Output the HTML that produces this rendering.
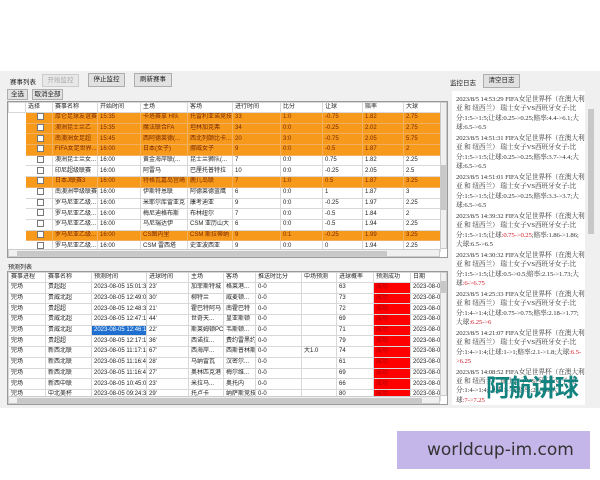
<!DOCTYPE html>
<html><head><meta charset="utf-8"><style>
*{margin:0;padding:0;box-sizing:border-box}
body{width:600px;height:480px;background:#fff;position:relative;overflow:hidden;font-family:"Liberation Sans","Noto Sans CJK SC",sans-serif;font-size:6.5px;color:#222}
.win{position:absolute;left:0;top:71px;width:600px;height:337px;background:#f0f0f0}
.abs{position:absolute}
.btn{position:absolute;border:1px solid #adadad;background:#e1e1e1;text-align:center;font-size:6.5px;line-height:12px;color:#222}
table{border-collapse:collapse;table-layout:fixed;position:absolute;background:#fff}
td{border:1px solid #d8d8d8;white-space:nowrap;overflow:hidden;padding-left:2px;font-size:6px;height:10.7px;line-height:9px}
tr.h td{background:#fff;height:8px;color:#222}
tr.o td{background:#f79a1c;color:#7a2800;border-color:#f0b060}
.cb{display:inline-block;width:7px;height:7px;border:1px solid #777;background:#fff;vertical-align:middle}
.sb{position:absolute;background:#f0f0f0;border:1px solid #ccc}
.log{position:absolute;left:452px;top:91px;width:133px;height:314px;background:#fff;overflow:hidden;padding-top:4px}
.log p{font-family:"Liberation Serif","Noto Serif CJK SC",serif;font-size:6.7px;line-height:9.3px;color:#333;margin:0 0 1.8px 4px;white-space:nowrap;letter-spacing:-0.1px}
.r{color:#d0202a}
.red{background:#f00!important;color:#a00}
.sel{background:#1e6fd0;color:#fff}
</style></head><body>
<div class="win">
<div class="abs" style="left:10px;top:5px;font-size:6.5px">赛事列表</div>
<div class="btn" style="left:42px;top:3px;width:37px;height:13px;color:#aaa;background:#e8e8e8;border-color:#ccc">开始监控</div>
<div class="btn" style="left:88px;top:2px;width:37px;height:14px">停止监控</div>
<div class="btn" style="left:134px;top:2px;width:38px;height:14px">刷新赛事</div>
<div class="btn" style="left:7px;top:18px;width:21px;height:11px;line-height:9px">全选</div>
<div class="btn" style="left:32px;top:18px;width:31px;height:11px;line-height:9px">取消全部</div>
<div class="abs" style="left:450px;top:6px">监控日志</div>
<div class="btn" style="left:483px;top:3px;width:37px;height:14px">清空日志</div>
</div>

<div class="abs" style="left:7px;top:101px;width:441px;height:157px;background:#fff;border:1px solid #999"></div>
<table style="left:8px;top:102px;width:432px">
<colgroup><col style="width:17px"><col style="width:27px"><col style="width:45px"><col style="width:43px"><col style="width:47px"><col style="width:45px"><col style="width:48px"><col style="width:42px"><col style="width:40px"><col style="width:41px"><col style="width:37px"></colgroup>
<tr class="h"><td></td><td>选择</td><td>赛事名称</td><td>开始时间</td><td>主场</td><td>客场</td><td>进行时间</td><td>比分</td><td>让球</td><td>赔率</td><td>大球</td></tr>
<tr class="o"><td style="background:#fff;border-color:#fff"></td><td style="text-align:center"><span class="cb"></span></td><td>厚仑足球友谊赛</td><td>15:35</td><td>卡塔赛拿 H队</td><td>托雷利亚诺竞技</td><td>33</td><td>1:0</td><td>-0.75</td><td>1.82</td><td>2.75</td></tr>
<tr class="o"><td style="background:#fff;border-color:#fff"></td><td style="text-align:center"><span class="cb"></span></td><td>澳洲昆士兰乙</td><td>15:35</td><td>魔法联合FA</td><td>坦林加克弗</td><td>34</td><td>0:0</td><td>-0.25</td><td>2.02</td><td>2.75</td></tr>
<tr class="o"><td style="background:#fff;border-color:#fff"></td><td style="text-align:center"><span class="cb"></span></td><td>南澳洲女足超</td><td>15:45</td><td>西阿德莱德(...</td><td>西北列颠比卡...</td><td>20</td><td>3:0</td><td>-0.75</td><td>2.05</td><td>5.75</td></tr>
<tr class="o"><td style="background:#fff;border-color:#fff"></td><td style="text-align:center"><span class="cb"></span></td><td>FIFA女足世界...</td><td>16:00</td><td>日本(女子)</td><td>挪威女子</td><td>9</td><td>0:0</td><td>-0.5</td><td>1.87</td><td>2</td></tr>
<tr><td style="border-color:#fff"></td><td style="text-align:center"><span class="cb"></span></td><td>澳洲昆士兰女...</td><td>16:00</td><td>黄金海岸联(...</td><td>昆士兰狮队(...</td><td>7</td><td>0:0</td><td>0.75</td><td>1.82</td><td>2.25</td></tr>
<tr><td style="border-color:#fff"></td><td style="text-align:center"><span class="cb"></span></td><td>印尼超级联赛</td><td>16:00</td><td>阿雷马</td><td>巴厘托普特拉</td><td>10</td><td>0:0</td><td>-0.25</td><td>2.05</td><td>2.5</td></tr>
<tr class="o"><td style="background:#fff;border-color:#fff"></td><td style="text-align:center"><span class="cb"></span></td><td>日本J联赛3</td><td>16:00</td><td>特格瓦嘉岛宫崎</td><td>鹿儿岛联</td><td>7</td><td>1:0</td><td>0.5</td><td>1.87</td><td>3.25</td></tr>
<tr><td style="border-color:#fff"></td><td style="text-align:center"><span class="cb"></span></td><td>南澳洲甲级联赛</td><td>16:00</td><td>伊斯特恩联</td><td>阿德莱德蓝鹰</td><td>6</td><td>0:0</td><td>1</td><td>1.87</td><td>3</td></tr>
<tr><td style="border-color:#fff"></td><td style="text-align:center"><span class="cb"></span></td><td>罗马尼亚乙级...</td><td>16:00</td><td>米耶尔库雷亚克</td><td>康考迪亚</td><td>9</td><td>0:0</td><td>-0.25</td><td>1.97</td><td>2.25</td></tr>
<tr><td style="border-color:#fff"></td><td style="text-align:center"><span class="cb"></span></td><td>罗马尼亚乙级...</td><td>16:00</td><td>梅尼迪格布斯</td><td>布林纽尔</td><td>7</td><td>0:0</td><td>-0.5</td><td>1.84</td><td>2</td></tr>
<tr><td style="border-color:#fff"></td><td style="text-align:center"><span class="cb"></span></td><td>罗马尼亚乙级...</td><td>16:00</td><td>乌尼瑞达伊</td><td>CSM 亚历山大</td><td>6</td><td>0:0</td><td>-0.5</td><td>1.94</td><td>2.25</td></tr>
<tr class="o"><td style="background:#fff;border-color:#fff"></td><td style="text-align:center"><span class="cb"></span></td><td>罗马尼亚乙级...</td><td>16:00</td><td>CS图内里</td><td>CSM 斯拉蒂纳</td><td>9</td><td>0:1</td><td>-0.25</td><td>1.99</td><td>3.25</td></tr>
<tr><td style="border-color:#fff"></td><td style="text-align:center"><span class="cb"></span></td><td>罗马尼亚乙级...</td><td>16:00</td><td>CSM 雷西塔</td><td>史亚波西亚</td><td>9</td><td>0:0</td><td>0</td><td>1.94</td><td>2.25</td></tr>
</table>
<div class="sb" style="left:8px;top:249px;width:432px;height:8px"><div class="abs" style="left:8px;top:1px;width:370px;height:5px;background:#c8c8c8"></div></div>
<div class="sb" style="left:440px;top:102px;width:7px;height:147px"><div class="abs" style="left:0;top:62px;width:5px;height:45px;background:#c8c8c8"></div></div>

<div class="abs" style="left:8px;top:262px;font-size:6px">预测列表</div>
<div class="abs" style="left:7px;top:271px;width:441px;height:134px;background:#fff;border:1px solid #999"></div>
<table style="left:8px;top:272px;width:432px">
<colgroup><col style="width:37px"><col style="width:46px"><col style="width:55px"><col style="width:42px"><col style="width:35px"><col style="width:32px"><col style="width:46px"><col style="width:35px"><col style="width:37px"><col style="width:37px"><col style="width:30px"></colgroup>
<tr class="h"><td>赛事进程</td><td>赛事名称</td><td>预测时间</td><td>进球时间</td><td>主场</td><td>客场</td><td>推送时比分</td><td>中场预测</td><td>进球概率</td><td>预测成功</td><td>日期</td></tr>
<tr><td>完场</td><td>贵超超</td><td>2023-08-05 15:01:38</td><td>23'</td><td>加菲斯特城</td><td>格莱港...</td><td>0-0</td><td></td><td>63</td><td class="red">成功</td><td>2023-08-05</td></tr>
<tr><td>完场</td><td>贵威北超</td><td>2023-08-05 12:49:07</td><td>30'</td><td>柳特兰</td><td>威麦顿...</td><td>0-0</td><td></td><td>73</td><td class="red">成功</td><td>2023-08-05</td></tr>
<tr><td>完场</td><td>贵超超</td><td>2023-08-05 12:48:39</td><td>21'</td><td>霍巴特阿马</td><td>南霍巴特</td><td>0-0</td><td></td><td>72</td><td class="red">成功</td><td>2023-08-05</td></tr>
<tr><td>完场</td><td>贵威北超</td><td>2023-08-05 12:47:15</td><td>44'</td><td>世奇天...</td><td>皇亚斯顿</td><td>0-0</td><td></td><td>69</td><td class="red">成功</td><td>2023-08-05</td></tr>
<tr><td>完场</td><td>贵威北超</td><td class="sel">2023-08-05 12:46:17</td><td>22'</td><td>斯莱姆顿PC</td><td>韦斯顿...</td><td>0-0</td><td></td><td>71</td><td class="red">成功</td><td>2023-08-05</td></tr>
<tr><td>完场</td><td>贵超超</td><td>2023-08-05 12:17:16</td><td>36'</td><td>西诺拉...</td><td>费约雷黑约</td><td>0-0</td><td></td><td>79</td><td class="red">成功</td><td>2023-08-05</td></tr>
<tr><td>完场</td><td>新西北联</td><td>2023-08-05 11:17:11</td><td>67'</td><td>西海岸...</td><td>西斯普林斯</td><td>0-0</td><td>大1.0</td><td>74</td><td class="red">成功</td><td>2023-08-05</td></tr>
<tr><td>完场</td><td>新西北联</td><td>2023-08-05 11:16:42</td><td>28'</td><td>马纳雷瓦</td><td>汉密尔...</td><td>0-0</td><td></td><td>61</td><td class="red">成功</td><td>2023-08-05</td></tr>
<tr><td>完场</td><td>新西北联</td><td>2023-08-05 11:16:42</td><td>27'</td><td>奥林匹克港</td><td>梅尔维...</td><td>0-0</td><td></td><td>69</td><td class="red">成功</td><td>2023-08-05</td></tr>
<tr><td>完场</td><td>新西中联</td><td>2023-08-05 10:45:00</td><td>23'</td><td>米拉马...</td><td>奥托内</td><td>0-0</td><td></td><td>66</td><td class="red">成功</td><td>2023-08-05</td></tr>
<tr><td>完场</td><td>中北美杯</td><td>2023-08-05 09:24:39</td><td>29'</td><td>托卢卡</td><td>纳萨斯竞技</td><td>0-0</td><td></td><td>80</td><td class="red">成功</td><td>2023-08-05</td></tr>
</table>
<div class="sb" style="left:8px;top:396px;width:432px;height:8px"><div class="abs" style="left:8px;top:1px;width:405px;height:5px;background:#c8c8c8"></div></div>
<div class="sb" style="left:440px;top:272px;width:7px;height:124px"><div class="abs" style="left:0;top:8px;width:5px;height:12px;background:#c8c8c8"></div></div>

<div class="log">
<p>2023/8/5 14:53:29 FIFA女足世界杯（在澳大利<br>亚 和 纽西兰） 瑞士女子VS西班牙女子:比<br>分:1:5-&gt;1:5;让球:0.25-&gt;0.25;赔率:4.4-&gt;6.1;大<br>球:6.5-&gt;6.5</p>
<p>2023/8/5 14:51:31 FIFA女足世界杯（在澳大利<br>亚 和 纽西兰） 瑞士女子VS西班牙女子:比<br>分:1:5-&gt;1:5;让球:0.25-&gt;0.25;赔率:3.7-&gt;4.4;大<br>球:6.5-&gt;6.5</p>
<p>2023/8/5 14:51:01 FIFA女足世界杯（在澳大利<br>亚 和 纽西兰） 瑞士女子VS西班牙女子:比<br>分:1:5-&gt;1:5;让球:0.25-&gt;0.25;赔率:3.3-&gt;3.7;大<br>球:6.5-&gt;6.5</p>
<p>2023/8/5 14:39:32 FIFA女足世界杯（在澳大利<br>亚 和 纽西兰） 瑞士女子VS西班牙女子:比<br>分:1:5-&gt;1:5;让球<span class="r">:0.75-&gt;0.25</span>;赔率:1.86-&gt;1.86;<br>大球:6.5-&gt;6.5</p>
<p>2023/8/5 14:30:32 FIFA女足世界杯（在澳大利<br>亚 和 纽西兰） 瑞士女子VS西班牙女子:比<br>分:1:5-&gt;1:5;让球:0.5-&gt;0.5;赔率:2.15-&gt;1.73;大<br>球<span class="r">:6-&gt;6.75</span></p>
<p>2023/8/5 14:25:33 FIFA女足世界杯（在澳大利<br>亚 和 纽西兰） 瑞士女子VS西班牙女子:比<br>分:1:4-&gt;1:4;让球:0.75-&gt;0.75;赔率:2.18-&gt;1.77;<br>大球<span class="r">:6.25-&gt;6</span></p>
<p>2023/8/5 14:21:07 FIFA女足世界杯（在澳大利<br>亚 和 纽西兰） 瑞士女子VS西班牙女子:比<br>分:1:4-&gt;1:4;让球:1-&gt;1;赔率:2.1-&gt;1.8;大球<span class="r">:6.5-</span><br><span class="r">&gt;6.25</span></p>
<p>2023/8/5 14:08:52 FIFA女足世界杯（在澳大利<br>亚 和 纽西兰） 瑞士女子VS西班牙女子:比<br>分:1:4-&gt;1:4;让球:1-&gt;1;赔率:2-&gt;1.8;大<br>球<span class="r">:7-&gt;7.25</span></p>
</div>
<div class="sb" style="left:586px;top:97px;width:10px;height:308px;border:none"><div class="abs" style="left:2px;top:12px;width:6px;height:125px;background:#c8c8c8"></div></div>
<div class="abs" style="left:486px;top:368px;font-size:24px;font-weight:bold;color:#13837f;letter-spacing:-1px;font-family:'Noto Sans CJK SC',sans-serif">阿航讲球</div>

<div class="abs" style="left:397px;top:431px;width:193px;height:38px;background:#c5b6e9;font-size:17px;line-height:38px;color:#333;padding-left:30px;font-family:'DejaVu Sans',sans-serif">worldcup-im.com</div>
</body></html>
